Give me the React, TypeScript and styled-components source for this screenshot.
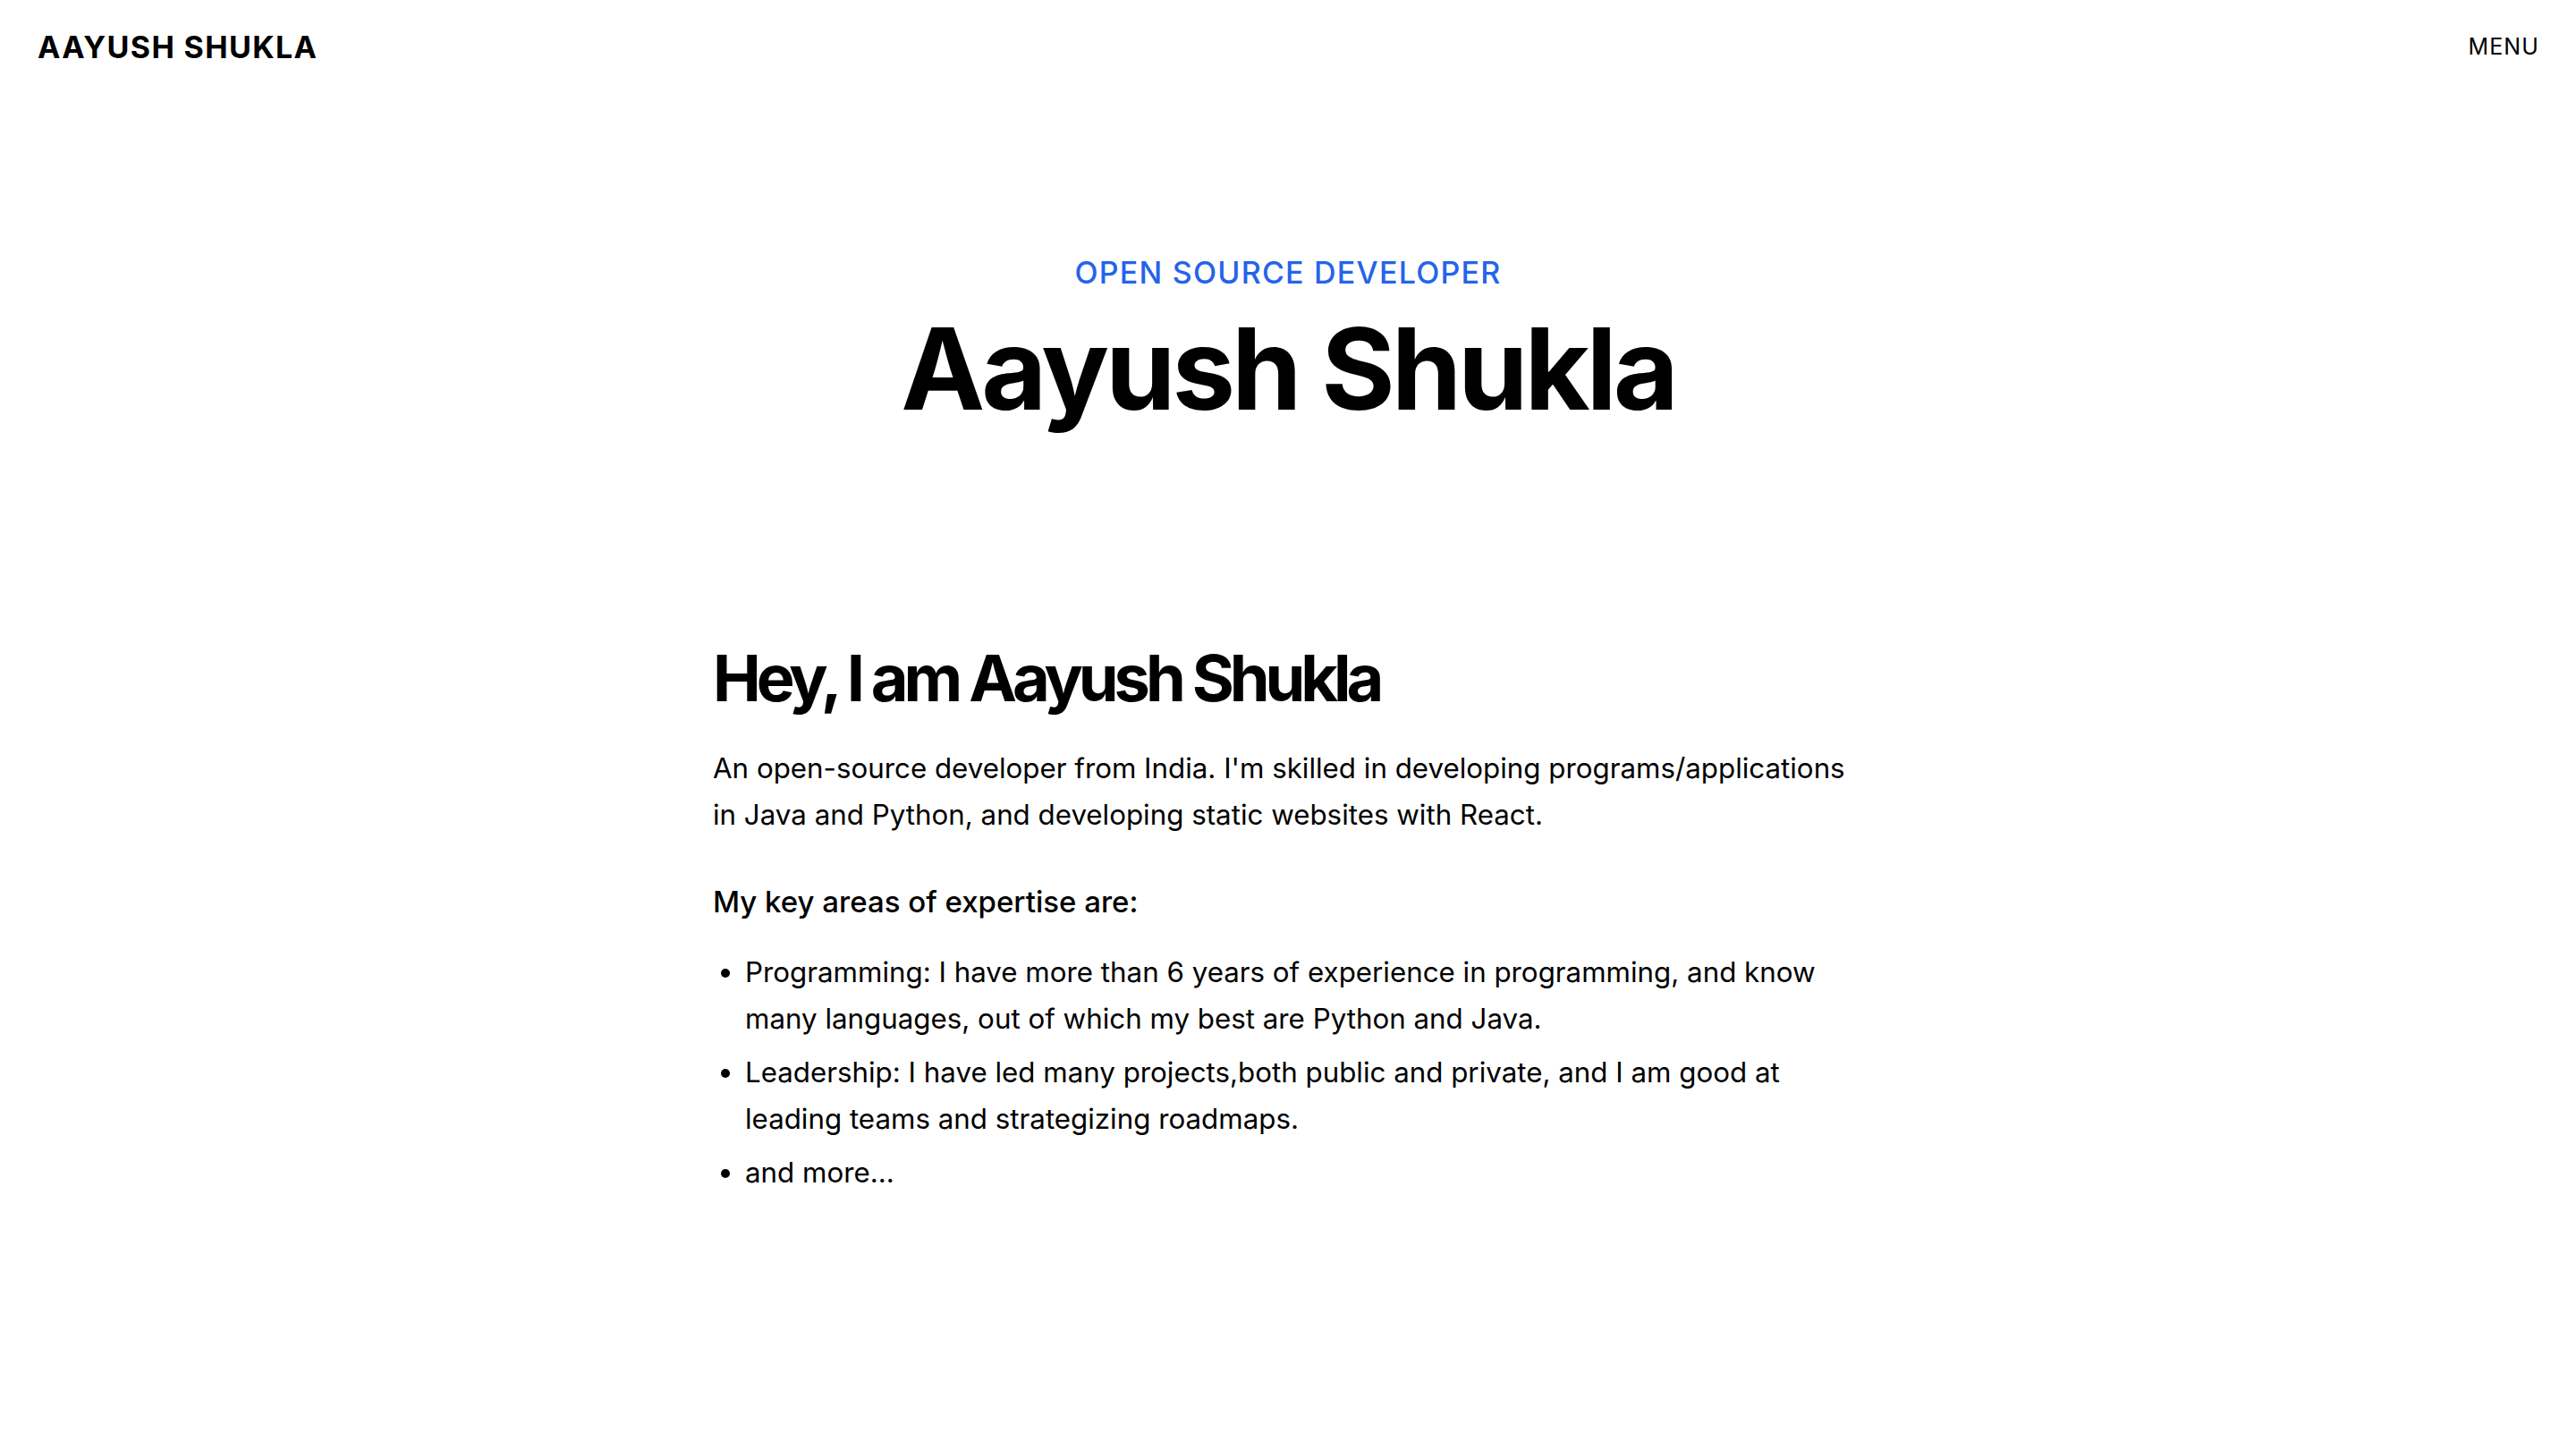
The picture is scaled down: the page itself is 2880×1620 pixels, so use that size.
import React from "react";
import styled, { createGlobalStyle } from "styled-components";

const GlobalStyle = createGlobalStyle`
  * { box-sizing: border-box; }
  html, body { margin: 0; padding: 0; background: #ffffff; }
  body {
    font-family: Inter, "Noto Sans", "Liberation Sans", sans-serif;
    color: #000000;
    -webkit-font-smoothing: antialiased;
  }
`;

const Page = styled.div`
  min-height: 1620px;
  background: #ffffff;
`;

const Header = styled.header`
  height: 104px;
  padding: 0 41px 0 42px;
  display: flex;
  align-items: center;
  justify-content: space-between;
`;

const Logo = styled.a`
  font-size: 34px;
  font-weight: 700;
  letter-spacing: 0.04em;
  color: #000;
  text-decoration: none;
`;

const MenuButton = styled.button`
  border: none;
  background: none;
  padding: 0;
  font-family: inherit;
  font-size: 25px;
  font-weight: 400;
  letter-spacing: 0.045em;
  color: #000;
  cursor: pointer;
`;

const Hero = styled.section`
  padding-top: 181px;
  display: flex;
  flex-direction: column;
  align-items: center;
  text-align: center;
`;

const Eyebrow = styled.p`
  margin: 0;
  font-size: 34px;
  line-height: 40px;
  font-weight: 500;
  letter-spacing: 0.036em;
  color: #2563eb;
`;

const Title = styled.h1`
  margin: 24px 0 0;
  font-size: 126px;
  line-height: 1;
  font-weight: 700;
  letter-spacing: -0.032em;
`;

const Content = styled.main`
  max-width: 1286px;
  margin: 240px auto 0;
`;

const Heading = styled.h2`
  margin: 0;
  font-size: 72px;
  line-height: 1.2;
  font-weight: 700;
  letter-spacing: -0.07em;
`;

const Paragraph = styled.p`
  margin: 32px 0 0;
  font-size: 31.3px;
  line-height: 52px;
  font-weight: 400;
`;

const Lead = styled.p`
  margin: 45px 0 0;
  font-size: 33px;
  line-height: 52px;
  font-weight: 500;
`;

const List = styled.ul`
  margin: 27px 0 0;
  padding-left: 36px;
  display: flex;
  flex-direction: column;
  gap: 8px;
`;

const Item = styled.li`
  font-size: 31.3px;
  line-height: 52px;
  list-style: disc;
`;

export default function App() {
  return (
    <Page>
      <GlobalStyle />
      <Header>
        <Logo href="#">AAYUSH SHUKLA</Logo>
        <MenuButton>MENU</MenuButton>
      </Header>
      <Hero>
        <Eyebrow>OPEN SOURCE DEVELOPER</Eyebrow>
        <Title>Aayush Shukla</Title>
      </Hero>
      <Content>
        <Heading>Hey, I am Aayush Shukla</Heading>
        <Paragraph>
          An open-source developer from India. I'm skilled in developing programs/applications in Java and
          Python, and developing static websites with React.
        </Paragraph>
        <Lead>My key areas of expertise are:</Lead>
        <List>
          <Item>
            Programming: I have more than 6 years of experience in programming, and know many languages, out of
            which my best are Python and Java.
          </Item>
          <Item>
            Leadership: I have led many projects,both public and private, and I am good at leading teams and
            strategizing roadmaps.
          </Item>
          <Item>and more...</Item>
        </List>
      </Content>
    </Page>
  );
}
